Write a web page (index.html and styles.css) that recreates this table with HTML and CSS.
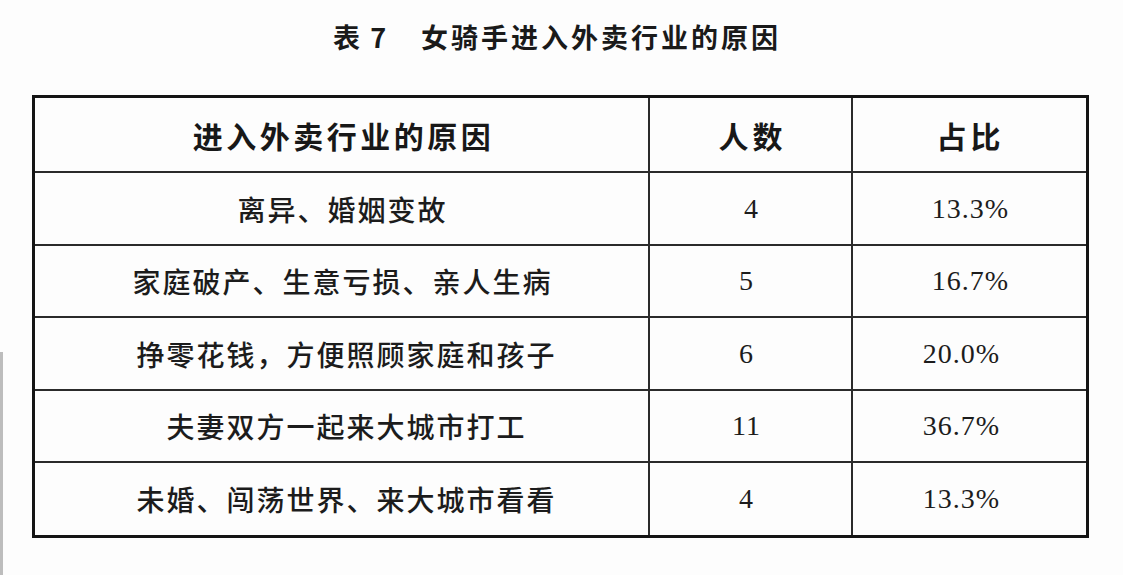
FILE: index.html
```html
<!DOCTYPE html>
<html lang="zh-CN">
<head>
<meta charset="utf-8">
<title>表 7 女骑手进入外卖行业的原因</title>
<link rel="stylesheet" href="styles.css">
</head>
<body>
<div class="page">
  <div class="edge"></div>
  <main class="content">
    <h1 class="caption"><span class="cap-no">表 7</span><span class="cap-text">女骑手进入外卖行业的原因</span></h1>
    <div class="table">
      <div class="cell head reason">进入外卖行业的原因</div>
      <div class="cell head count">人数</div>
      <div class="cell head ratio last">占比</div>

      <div class="cell reason">离异、婚姻变故</div>
      <div class="cell num count">4</div>
      <div class="cell num ratio last">13.3%</div>

      <div class="cell reason">家庭破产、生意亏损、亲人生病</div>
      <div class="cell num count nudge-l">5</div>
      <div class="cell num ratio last">16.7%</div>

      <div class="cell reason nudge-r">挣零花钱，方便照顾家庭和孩子</div>
      <div class="cell num count nudge-l">6</div>
      <div class="cell num ratio last nudge-l2">20.0%</div>

      <div class="cell reason nudge-r">夫妻双方一起来大城市打工</div>
      <div class="cell num count nudge-l">11</div>
      <div class="cell num ratio last nudge-l2">36.7%</div>

      <div class="cell reason nudge-r bottom">未婚、闯荡世界、来大城市看看</div>
      <div class="cell num count bottom nudge-l">4</div>
      <div class="cell num ratio last bottom nudge-l2">13.3%</div>
    </div>
  </main>
</div>
</body>
</html>
```
FILE: styles.css
```css
* { box-sizing: border-box; }

html, body {
  margin: 0;
  padding: 0;
  background: #fdfdfd;
}

body {
  width: 1123px;
  height: 575px;
  overflow: hidden;
  color: #1c1c1c;
  font-family: "Noto Sans CJK SC", "Noto Sans", sans-serif;
}

.page {
  display: flex;
  height: 575px;
}

.edge {
  width: 3px;
  height: 223px;
  align-self: flex-end;
  background: #bdbdbd;
  flex: none;
}

.content {
  flex: 1;
  display: flex;
  flex-direction: column;
}

.caption {
  margin: 0;
  padding: 17px 0 0 330px;
  font-size: 27px;
  line-height: 40px;
  font-weight: 700;
  color: #1a1a1a;
  white-space: nowrap;
}

.cap-no {
  letter-spacing: 1px;
  word-spacing: 2px;
}

.cap-text {
  margin-left: 34px;
  letter-spacing: 3px;
}

.table {
  margin: 38px 0 0 29px;
  width: 1057px;
  display: grid;
  grid-template-columns: 615px 203px 233px;
  grid-template-rows: 75px 73px 72px 73px 72px 72px;
  border: 3px solid #141414;
}

.cell {
  display: flex;
  align-items: center;
  justify-content: center;
  border-right: 2px solid #2b2b2b;
  border-bottom: 2px solid #2b2b2b;
  font-size: 28px;
  font-weight: 500;
  letter-spacing: 2px;
  padding-left: 2px;
  white-space: nowrap;
}

.cell.last { border-right: none; }
.cell.bottom { border-bottom: none; }

.head {
  font-size: 30px;
  font-weight: 700;
  color: #181818;
  letter-spacing: 4px;
  padding-left: 4px;
}

.head.reason {
  letter-spacing: 3.5px;
  padding-left: 4px;
}

.num {
  font-family: "Liberation Serif", "Times New Roman", serif;
  font-size: 28px;
  font-weight: 400;
  letter-spacing: 1px;
}

.nudge-r { padding-left: 10px; }
.nudge-l { padding-right: 10px; }
.nudge-l2 { padding-right: 18px; }
.ratio.head { padding-right: 2px; }
```
